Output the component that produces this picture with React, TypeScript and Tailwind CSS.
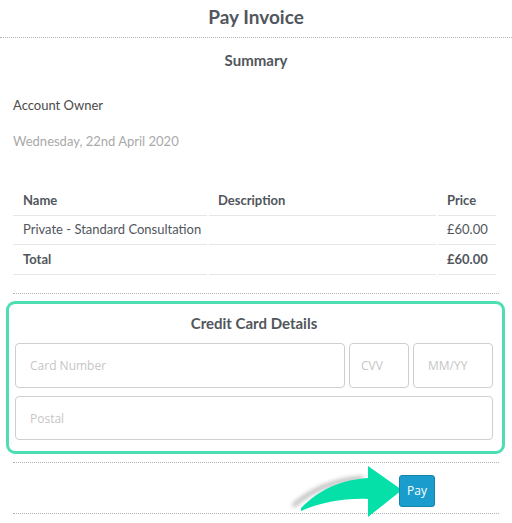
const rows = [
  { name: "Private - Standard Consultation", description: "", price: "£60.00" },
];

function Arrow() {
  return (
    <svg
      className="absolute left-[270px] top-[-7px]"
      width="130"
      height="68"
      viewBox="0 0 130 68"
    >
      <defs>
        <filter id="blur" x="-20%" y="-50%" width="140%" height="200%">
          <feGaussianBlur stdDeviation="2" />
        </filter>
      </defs>
      {/* soft shadow under the shaft */}
      <path
        d="M10,50 C28,34 50,24 80,22"
        fill="none"
        stroke="#9a9a9a"
        strokeWidth="4"
        filter="url(#blur)"
        opacity="0.7"
      />
      <path
        d="M18,52 C36,34 56,24 85,22 L85,10 L119,34 L85,61 L85,43 C60,42 36,47 18,55 Z"
        fill="#05e0a9"
      />
    </svg>
  );
}

export default function App() {
  return (
    <div className="w-[512px] h-[523px] bg-white font-['Lato',sans-serif] text-[#51565c] overflow-hidden">
      {/* Header */}
      <div className="h-[38px] pb-[2px] border-b border-dotted border-[#b5b5b5] flex items-center justify-center text-[19px] font-bold">
        Pay Invoice
      </div>

      <div className="px-[13px]">
        <div className="h-[45px] flex items-center justify-center text-[15px] font-bold">
          Summary
        </div>

        <div className="mt-[13px] h-[20px] flex items-center text-[13px] text-[#4a4a4a]">
          Account Owner
        </div>
        <div className="mt-[16px] h-[20px] flex items-center text-[13px] text-[#a9a9a9]">
          Wednesday, 22nd April 2020
        </div>

        {/* Line items */}
        <table className="mt-[35px] table-fixed border-separate border-spacing-x-[2px] border-spacing-y-0 -mx-[2px] w-[487px] text-[13px]">
          <thead>
            <tr className="font-bold">
              <th className="h-[29px] w-[194px] border-b border-[#e6e6e6] pl-[10px] text-left">Name</th>
              <th className="h-[29px] border-b border-[#e6e6e6] pl-[9px] text-left">Description</th>
              <th className="h-[29px] w-[58px] border-b border-[#e6e6e6] pl-[9px] text-left">Price</th>
            </tr>
          </thead>
          <tbody>
            {rows.map((r) => (
              <tr key={r.name}>
                <td className="h-[29px] border-b border-[#e6e6e6] pl-[10px] whitespace-nowrap">{r.name}</td>
                <td className="h-[29px] border-b border-[#e6e6e6] pl-[9px]">{r.description}</td>
                <td className="h-[29px] border-b border-[#e6e6e6] pl-[9px]">{r.price}</td>
              </tr>
            ))}
            <tr className="font-bold">
              <td className="h-[30px] border-b border-[#e6e6e6] pl-[10px]">Total</td>
              <td className="h-[30px] border-b border-[#e6e6e6] pl-[9px]"></td>
              <td className="h-[30px] border-b border-[#e6e6e6] pl-[9px]">£60.00</td>
            </tr>
          </tbody>
        </table>

        <div className="mt-[18px] border-t border-dotted border-[#b5b5b5]" />

        {/* Credit card */}
        <div className="mt-[7px] ml-[-7px] mr-[-6px] border-[3px] border-[#4ddfb3] rounded-[9px] pl-[6px] pr-[9px] pb-[11px]">
          <div className="h-[39px] flex items-center justify-center text-[15px] font-bold">
            Credit Card Details
          </div>
          <div className="flex gap-[4px]">
            <input
              placeholder="Card Number"
              className="flex-1 min-w-0 h-[45px] border border-[#cfcfcf] rounded-[4px] px-[14px] text-[12px] font-['Open_Sans',sans-serif] placeholder:text-[#c6c6c6] outline-none"
            />
            <input
              placeholder="CVV"
              className="w-[60px] h-[45px] border border-[#cfcfcf] rounded-[4px] px-[11px] text-[12px] font-['Open_Sans',sans-serif] placeholder:text-[#c6c6c6] outline-none"
            />
            <input
              placeholder="MM/YY"
              className="w-[80px] h-[45px] border border-[#cfcfcf] rounded-[4px] px-[14px] text-[12px] font-['Open_Sans',sans-serif] placeholder:text-[#c6c6c6] outline-none"
            />
          </div>
          <input
            placeholder="Postal"
            className="mt-[8px] w-full h-[44px] border border-[#cfcfcf] rounded-[4px] px-[14px] text-[12px] font-['Open_Sans',sans-serif] placeholder:text-[#c6c6c6] outline-none"
          />
        </div>

        <div className="mt-[8px] border-t border-dotted border-[#b5b5b5]" />

        {/* Pay */}
        <div className="relative h-[51px] pt-[12px] flex justify-end pr-[64px] border-b border-dotted border-[#b5b5b5]">
          <Arrow />
          <button className="relative w-[36px] h-[32px] bg-[#1a9dcc] border border-[#1683ad] rounded-[3px] text-white text-[12px] font-['Open_Sans',sans-serif]">
            Pay
          </button>
        </div>
      </div>
    </div>
  );
}
